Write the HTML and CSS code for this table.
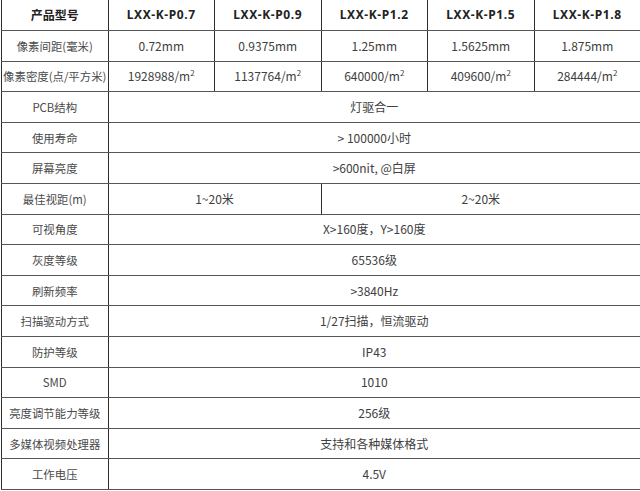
FILE: index.html
```html
<!DOCTYPE html>
<html lang="zh">
<head>
<meta charset="utf-8">
<title>规格参数</title>
<link rel="stylesheet" href="styles.css">
</head>
<body>
<table class="spec">
  <colgroup>
    <col><col><col><col><col><col>
  </colgroup>
  <tr class="head">
    <th>产品型号</th>
    <th>LXX-K-P0.7</th>
    <th>LXX-K-P0.9</th>
    <th>LXX-K-P1.2</th>
    <th>LXX-K-P1.5</th>
    <th>LXX-K-P1.8</th>
  </tr>
  <tr>
    <td class="label">像素间距(毫米)</td>
    <td>0.72mm</td>
    <td>0.9375mm</td>
    <td>1.25mm</td>
    <td>1.5625mm</td>
    <td>1.875mm</td>
  </tr>
  <tr>
    <td class="label">像素密度(点/平方米)</td>
    <td>1928988/m<sup>2</sup></td>
    <td>1137764/m<sup>2</sup></td>
    <td>640000/m<sup>2</sup></td>
    <td>409600/m<sup>2</sup></td>
    <td>284444/m<sup>2</sup></td>
  </tr>
  <tr><td class="label">PCB结构</td><td colspan="5">灯驱合一</td></tr>
  <tr><td class="label">使用寿命</td><td colspan="5">&gt; 100000小时</td></tr>
  <tr><td class="label">屏幕亮度</td><td colspan="5">&gt;600nit, @白屏</td></tr>
  <tr><td class="label">最佳视距(m)</td><td colspan="2">1~20米</td><td colspan="3">2~20米</td></tr>
  <tr><td class="label">可视角度</td><td colspan="5">X&gt;160度，Y&gt;160度</td></tr>
  <tr><td class="label">灰度等级</td><td colspan="5">65536级</td></tr>
  <tr><td class="label">刷新频率</td><td colspan="5">&gt;3840Hz</td></tr>
  <tr><td class="label">扫描驱动方式</td><td colspan="5">1/27扫描，恒流驱动</td></tr>
  <tr><td class="label">防护等级</td><td colspan="5">IP43</td></tr>
  <tr><td class="label">SMD</td><td colspan="5">1010</td></tr>
  <tr><td class="label">亮度调节能力等级</td><td colspan="5">256级</td></tr>
  <tr><td class="label">多媒体视频处理器</td><td colspan="5">支持和各种媒体格式</td></tr>
  <tr><td class="label">工作电压</td><td colspan="5">4.5V</td></tr>
</table>
</body>
</html>
```

FILE: styles.css
```css
html, body {
  margin: 0;
  padding: 0;
  background: #ffffff;
}

body {
  width: 640px;
  height: 491px;
  overflow: hidden;
  font-family: "Noto Sans CJK SC", "Noto Sans", sans-serif;
  font-size: 12px;
  color: #404040;
}

.spec {
  width: 639px;
  margin-left: 1px;
  border-collapse: collapse;
  table-layout: fixed;
}

.spec col {
  width: 106.5px;
}

.spec tr {
  height: 30.6px;
}

.spec th,
.spec td {
  border-left: 1px solid #2e2e2e;
  border-right: 1px solid #2e2e2e;
  border-bottom: 1px solid #555;
  padding: 0;
  text-align: center;
  vertical-align: middle;
  line-height: 16px;
  white-space: nowrap;
}

.spec .head th {
  border-top: none;
  font-family: "Noto Sans", "Noto Sans CJK SC", sans-serif;
  font-weight: bold;
  font-size: 12px;
  letter-spacing: 0.6px;
  color: #222;
}

.spec .head th:first-child {
  font-family: "Noto Sans CJK SC", sans-serif;
  letter-spacing: 0;
}

.spec td.label {
  font-size: 11.4px;
  color: #4a4a4a;
}

.spec sup {
  font-size: 8px;
  line-height: 0;
  vertical-align: 5px;
}
```
